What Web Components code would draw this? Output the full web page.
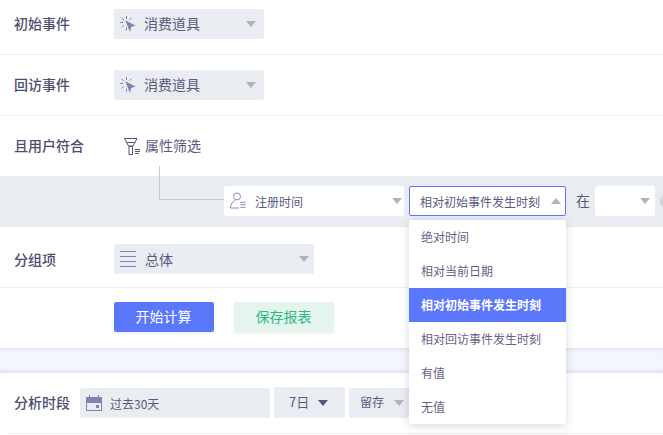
<!DOCTYPE html>
<html lang="zh">
<head>
<meta charset="utf-8">
<style>
html,body{margin:0;padding:0;background:#fff;overflow:hidden;height:435px;width:663px}
body{font-family:"Noto Sans CJK SC","Noto Sans",sans-serif;color:#5a5a80;font-size:14px}
</style>
</head>
<body>
<app-page></app-page>
<script>
const ICONS={
click:`<svg width="16" height="16" viewBox="0 0 16 16"><path d="M5.2 4.2 15.6 9.4 11.2 11 10 16Z" fill="#8482b0"/><g stroke="#8482b0" stroke-width="1" fill="none"><path d="M6.5 0v3M1.6 1.8l2.2 2.2M11.4 1.8 9.4 3.8M0 6.5h3M1.6 11.4l2.2-2.2M6.5 11.5v3"/></g></svg>`,
list:`<svg width="16" height="16" viewBox="0 0 16 16" fill="none" stroke="#8482b0" stroke-width="1"><path d="M0 .5h16M0 5.5h16M0 10.5h16M0 15.5h16"/></svg>`,
filter:`<svg width="17" height="17" viewBox="0 0 17 17" fill="none" stroke="#55557a" stroke-width="1"><path d="M.5.5h12.5L9 8H4.5Z"/><path d="M2.5 4.5h8.5"/><path d="M5 8.5h3.5v8H5Z"/><path d="M11 11.5h5M11 13.5h5M11 15.5h4"/></svg>`,
user:`<svg width="17" height="17" viewBox="0 0 17 17" fill="none" stroke="#8482b0" stroke-width="1"><circle cx="7.5" cy="4.2" r="3.7"/><path d="M.5 16.5c0-4 2.3-7 5-8M.5 16.5h9"/><path d="M11 10.5h5.5M11 13h5.5M11 15.8h5.5"/></svg>`,
cal:`<svg width="16" height="16" viewBox="0 0 16 16"><rect x=".5" y="2.5" width="15" height="13" fill="none" stroke="#8482b0"/><rect x="0" y="3" width="16" height="5" fill="#8482b0"/><path d="M3.5 0v3M12.5 0v3" stroke="#8482b0"/><rect x="10" y="10" width="3" height="3" fill="#8482b0"/></svg>`
};

class XSelect extends HTMLElement{
  connectedCallback(){
    const a=n=>this.getAttribute(n);
    const icon=a('icon');
    const r=this.attachShadow({mode:'open'});
    r.innerHTML=`<style>
    :host{display:flex;align-items:center;box-sizing:border-box;height:30px;width:${a('w')}px;background:${a('bg')||'#e9ecf0'};border-radius:${a('radius')||2}px;flex:none;
      padding-left:${a('pad')||6}px;padding-right:${a('pr')||8}px;font-size:${a('fs')||14}px;color:${a('color')||'#5a5a80'};line-height:20px;${a('extra')||''}}
    .i{display:flex;flex:none;width:16px;height:16px;margin-right:${a('gap')||8}px;${a('iy')?`transform:translateY(${a('iy')}px)`:''}}
    .t{flex:1;white-space:nowrap;margin-top:${a('tm')||-2}px}
    .a{flex:none;width:0;height:0;border-left:5px solid transparent;border-right:5px solid transparent}
    .a.d{border-top:6px solid ${a('ac')||'#b2b4bc'}}
    .a.u{border-bottom:6px solid ${a('ac')||'#b2b4bc'}}
    </style>
    ${icon?`<span class="i">${ICONS[icon]}</span>`:''}<span class="t"><slot></slot></span>${a('noarrow')!==null?'':`<span class="a ${a('up')!==null?'u':'d'}"></span>`}`;
  }
}
customElements.define('x-select',XSelect);

class XRow extends HTMLElement{
  connectedCallback(){
    const a=n=>this.getAttribute(n);
    const r=this.attachShadow({mode:'open'});
    r.innerHTML=`<style>
    :host{display:block;position:relative;box-sizing:border-box;height:${a('h')}px;padding-top:${a('top')}px}
    :host::after{content:"";position:absolute;left:${a('line')||0}px;right:0;bottom:0;height:1px;background:${a('nb')!==null?'transparent':'#eceef0'}}
    .r{display:flex;height:30px;align-items:center;padding-left:14px}
    .l{flex:none;width:${a('lw')||100}px;font-size:14px;font-weight:500;color:#4e4e6e;line-height:20px;white-space:nowrap;margin-top:${a('lm')||-2}px}
    </style>
    <div class="r"><span class="l">${a('label')||''}</span><slot></slot></div>`;
  }
}
customElements.define('x-row',XRow);

class XButton extends HTMLElement{
  connectedCallback(){
    const a=n=>this.getAttribute(n);
    const r=this.attachShadow({mode:'open'});
    r.innerHTML=`<style>
    :host{display:flex;align-items:center;justify-content:center;flex:none;width:100px;height:30px;border-radius:2px;font-size:14px;box-sizing:border-box;padding-bottom:2px;padding-right:1px;
      background:${a('bg')};color:${a('color')};box-shadow:0 2px 3px rgba(90,100,140,.08)}
    </style><slot></slot>`;
  }
}
customElements.define('x-button',XButton);

class XDropdown extends HTMLElement{
  connectedCallback(){
    const r=this.attachShadow({mode:'open'});
    r.innerHTML=`<style>
    :host{display:block;position:absolute;left:409px;top:220px;width:157px;background:#fff;border-radius:3px;box-shadow:0 2px 10px rgba(60,70,100,.2);overflow:hidden;z-index:5}
    </style><slot></slot>`;
  }
}
customElements.define('x-dropdown',XDropdown);

class XOption extends HTMLElement{
  connectedCallback(){
    const on=this.hasAttribute('active');
    const r=this.attachShadow({mode:'open'});
    r.innerHTML=`<style>
    :host{display:flex;align-items:center;box-sizing:border-box;height:34px;padding-left:12px;padding-bottom:2px;font-size:12px;white-space:nowrap;
      color:${on?'#fff':'#64647f'};background:${on?'#5b78fc':'#fff'};font-weight:${on?700:400}}
    </style><slot></slot>`;
  }
}
customElements.define('x-option',XOption);

class XBand extends HTMLElement{
  connectedCallback(){
    const r=this.attachShadow({mode:'open'});
    r.innerHTML=`<style>
    :host{display:flex;position:relative;box-sizing:border-box;height:51px;background:#e9ecf0;padding:10px 0 0 224px;align-items:flex-start}
    .c{position:absolute;left:159px;top:-10px;width:65px;height:34px;box-sizing:border-box;border-left:1px solid #c9c9cc;border-bottom:1px solid #c9c9cc}
    </style><span class="c"></span><slot></slot>`;
  }
}
customElements.define('x-band',XBand);

class XLinkBtn extends HTMLElement{
  connectedCallback(){
    const r=this.attachShadow({mode:'open'});
    r.innerHTML=`<style>
    :host{display:flex;align-items:center;gap:4px;margin-left:10px;font-size:14px;color:#5a5a80;line-height:20px}
    svg{display:block;flex:none}
    span{margin-top:-2px}
    </style>${ICONS.filter}<span><slot></slot></span>`;
  }
}
customElements.define('x-linkbtn',XLinkBtn);

class XDivider extends HTMLElement{
  connectedCallback(){
    const r=this.attachShadow({mode:'open'});
    r.innerHTML=`<style>
    :host{display:block;height:25px;background:#f4f6fd;box-shadow:inset 0 5px 5px -4px rgba(120,130,170,.22),inset 0 -5px 5px -4px rgba(120,130,170,.28)}
    </style>`;
  }
}
customElements.define('x-divider',XDivider);

class XCircle extends HTMLElement{
  connectedCallback(){
    const r=this.attachShadow({mode:'open'});
    r.innerHTML=`<style>:host{display:block;flex:none;width:18px;height:18px;border-radius:50%;background:#d4d6da;margin:6px 0 0 5px}</style>`;
  }
}
customElements.define('x-circle',XCircle);

class AppPage extends HTMLElement{
  connectedCallback(){
    const r=this.attachShadow({mode:'open'});
    r.innerHTML=`<style>
    :host{display:block;position:relative;width:663px;height:435px;overflow:hidden;background:#fff}
    </style>
    <x-row h="55" top="9" label="初始事件"><x-select w="150" icon="click" pad="6" gap="8">消费道具</x-select></x-row>
    <x-row h="61" top="15" label="回访事件"><x-select w="150" icon="click" pad="6" gap="8">消费道具</x-select></x-row>
    <x-row h="60" top="15" label="且用户符合" nb><x-linkbtn>属性筛选</x-linkbtn></x-row>
    <x-band>
      <x-select w="180" bg="#fff" icon="user" pad="6" gap="9" fs="12" pr="2" iy="-1" tm="2">注册时间</x-select>
      <x-select w="157" bg="#fff" extra="border:1px solid #5b78fc;margin-left:5px;" pad="10" fs="12" pr="4" tm="2" up>相对初始事件发生时刻</x-select>
      <span style="height:30px;line-height:28px;margin:0 5px 0 10px;font-size:14px;color:#5a5a80;white-space:nowrap">在</span>
      <x-select w="60" bg="#fff" pad="6" pr="5"></x-select>
      <x-circle></x-circle>
    </x-band>
    <x-row h="61" top="17" label="分组项" lm="0"><x-select w="200" icon="list" pad="6" gap="9" pr="5" tm="0">总体</x-select></x-row>
    <x-row h="60" top="14" nb>
      <div style="display:flex;gap:20px"><x-button bg="#5b78fc" color="#fff">开始计算</x-button><x-button bg="#e3f5ec" color="#2abb7f">保存报表</x-button></div>
    </x-row>
    <x-divider></x-divider>
    <x-row h="61" top="15" label="分析时段" lw="66" line="9">
      <x-select w="190" icon="cal" pad="6" gap="8" fs="12" tm="2" noarrow>过去30天</x-select>
      <x-select w="71" pad="15" fs="13" pr="17" ac="#55557a" extra="margin-left:4px;height:31px;margin-top:-1px;">7日</x-select>
      <x-select w="60" pad="11" fs="12" pr="5" extra="margin-left:4px;">留存</x-select>
    </x-row>
    <x-dropdown>
      <x-option>绝对时间</x-option>
      <x-option>相对当前日期</x-option>
      <x-option active>相对初始事件发生时刻</x-option>
      <x-option>相对回访事件发生时刻</x-option>
      <x-option>有值</x-option>
      <x-option>无值</x-option>
    </x-dropdown>`;
  }
}
customElements.define('app-page',AppPage);
</script>
</body>
</html>
